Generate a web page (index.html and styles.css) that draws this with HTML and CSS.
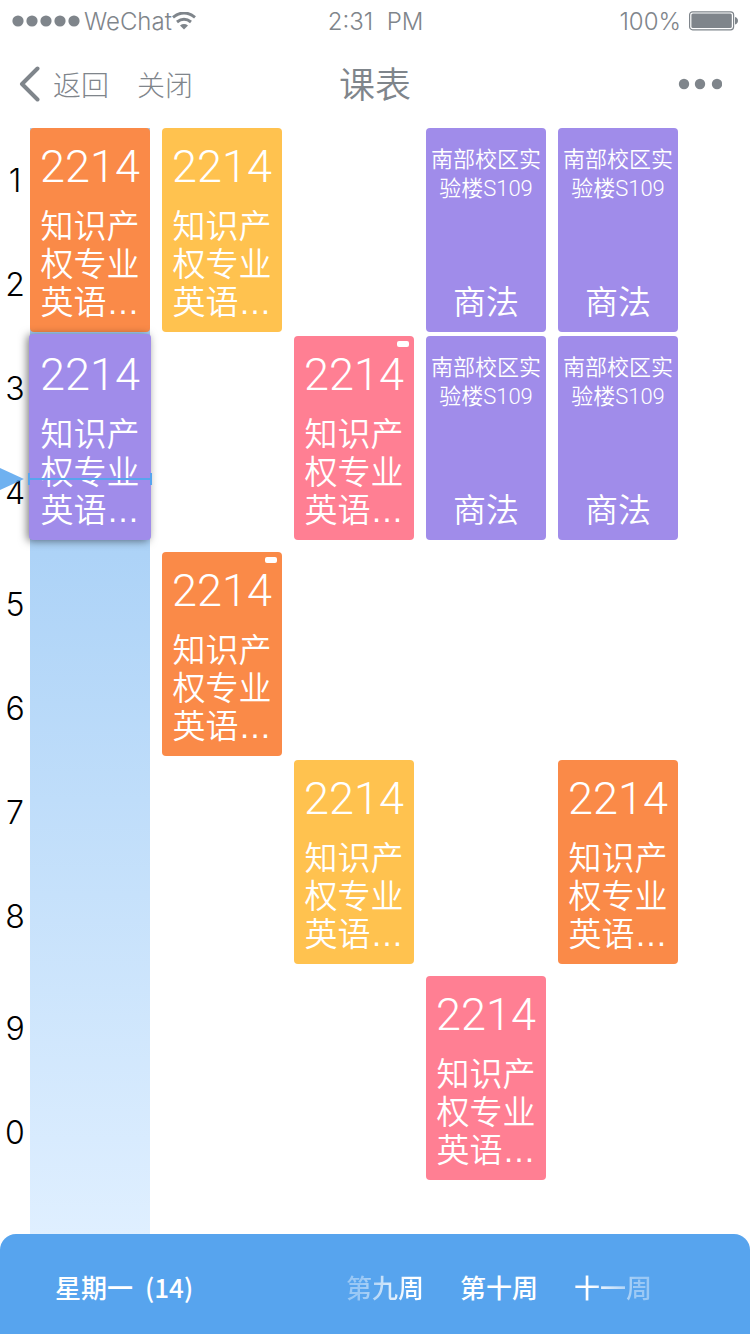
FILE: index.html
```html
<!DOCTYPE html>
<html lang="zh-CN">
<head>
<meta charset="utf-8">
<meta name="viewport" content="width=device-width, initial-scale=1">
<title>课表</title>
<link rel="stylesheet" href="styles.css">
</head>
<body>
<div class="status">
  <div class="status-left">
    <svg class="signal" width="68" height="12" viewBox="0 0 68 12" aria-hidden="true"><circle cx="6" cy="6" r="5.6"/><circle cx="20" cy="6" r="5.6"/><circle cx="34" cy="6" r="5.6"/><circle cx="48" cy="6" r="5.6"/><circle cx="62" cy="6" r="5.6"/></svg>
    <span class="carrier">WeChat</span>
    <svg class="wifi" width="24" height="18" viewBox="0 0 24 18" aria-hidden="true"><path d="M1 5.4Q12-3.4 23 5.4M5 10Q12 4.4 19 10" fill="none" stroke="currentColor" stroke-width="3"/><path d="M8 13.4Q12 10.6 16 13.4L12 17.6Z"/></svg>
  </div>
  <div class="clock">2:31&nbsp; PM</div>
  <div class="status-right">
    <span>100%</span>
    <svg width="50" height="20" viewBox="0 0 50 20" aria-hidden="true"><rect x=".6" y=".8" width="44" height="18" rx="3" fill="none" stroke="currentColor" stroke-width="1.2"/><rect x="2.4" y="2.6" width="40.4" height="14.4" rx="1.5"/><path d="M46 6Q49 7 49 9.8T46 13.6Z"/></svg>
  </div>
</div>
<header class="nav">
  <div class="nav-left">
    <button class="back" type="button"><svg width="24" height="36" viewBox="0 0 24 36" aria-hidden="true"><path d="M21.5 2.5 6 18 21.5 33.5" fill="none" stroke="currentColor" stroke-width="4" stroke-linecap="round" stroke-linejoin="round"/></svg>返回</button>
    <button type="button">关闭</button>
  </div>
  <h1>课表</h1>
  <button class="more" type="button" aria-label="更多"><svg width="44" height="12" viewBox="0 0 44 12" aria-hidden="true"><circle cx="6" cy="6" r="5.2"/><circle cx="22" cy="6" r="5.2"/><circle cx="39" cy="6" r="5.2"/></svg></button>
</header>
<main class="schedule">
  <div class="today"></div>
  <span class="period p1">1</span>
  <span class="period p2">2</span>
  <span class="period p3">3</span>
  <span class="period p4">4</span>
  <span class="period p5">5</span>
  <span class="period p6">6</span>
  <span class="period p7">7</span>
  <span class="period p8">8</span>
  <span class="period p9">9</span>
  <span class="period p10">0</span>

  <article class="course orange day1 slot1"><b>2214</b><p>知识产权专业英语…</p></article>
  <article class="course yellow day2 slot1"><b>2214</b><p>知识产权专业英语…</p></article>
  <article class="course room purple day4 slot1"><span>南部校区实验楼S109</span><p>商法</p></article>
  <article class="course room purple day5 slot1"><span>南部校区实验楼S109</span><p>商法</p></article>

  <article class="course purple current day1 slot2"><b>2214</b><p>知识产权专业英语…</p>
    <svg class="pointer" width="24" height="22" viewBox="0 0 24 22" aria-hidden="true"><path d="M0 0 24 11 0 22Z"/></svg>
    <span class="now"></span>
  </article>
  <article class="course pink tagged day3 slot2"><b>2214</b><p>知识产权专业英语…</p></article>
  <article class="course room purple day4 slot2"><span>南部校区实验楼S109</span><p>商法</p></article>
  <article class="course room purple day5 slot2"><span>南部校区实验楼S109</span><p>商法</p></article>

  <article class="course orange tagged day2 slot3"><b>2214</b><p>知识产权专业英语…</p></article>
  <article class="course yellow day3 slot4"><b>2214</b><p>知识产权专业英语…</p></article>
  <article class="course orange day5 slot4"><b>2214</b><p>知识产权专业英语…</p></article>
  <article class="course pink day4 slot5"><b>2214</b><p>知识产权专业英语…</p></article>
</main>
<footer class="bar">
  <div class="date"><span>星期一</span><span>(14)</span></div>
  <div class="weeks">
    <button class="prev" type="button">第九周</button>
    <button type="button">第十周</button>
    <button class="next" type="button">十一周</button>
  </div>
</footer>
</body>
</html>
```
FILE: styles.css
```css
* { box-sizing: border-box; }
body {
  margin: 0;
  min-height: 100vh;
  display: flex;
  flex-direction: column;
  background: #fff;
  color: #7f858b;
  font-family: Roboto, "Noto Sans CJK SC", sans-serif;
  font-weight: 300;
}
svg { display: block; fill: currentColor; }
button {
  margin: 0;
  padding: 0;
  border: 0;
  background: none;
  color: inherit;
  font: inherit;
  cursor: pointer;
}
p, h1 { margin: 0; font-weight: 350; }

.status, .nav {
  display: grid;
  grid-template-columns: 1fr auto 1fr;
  align-items: center;
}
.status {
  height: 42px;
  padding: 0 11px 0 12px;
  font-family: Inter, sans-serif;
  font-size: 24px;
}
.status-left, .status-right { display: flex; align-items: center; }
.status-left { gap: 4px; }
.wifi { margin-left: -4px; }
.status-right { justify-content: flex-end; gap: 8px; }

.nav {
  height: 86px;
  padding: 0 16px 2px;
  font-size: 28px;
}
.nav-left { display: flex; align-items: center; gap: 28px; }
.back { display: flex; align-items: center; gap: 13px; }
.nav h1 { padding-top: 4px; font-size: 36px; line-height: 40px; }
.more { justify-self: end; margin-right: 12px; }

.schedule {
  flex: 1;
  display: grid;
  grid-template-columns: 18px repeat(5, 1fr);
  grid-template-rows: repeat(4, 104px) 8px repeat(4, 104px) 8px repeat(2, 104px) minmax(50px, 1fr);
  column-gap: 12px;
  padding-right: 72px;
}
.today {
  grid-area: 1 / 2 / -1 / 3;
  background: linear-gradient(#a6cff6 30%, #dfefff);
}
.period {
  grid-column: 1;
  margin-right: -12px;
  align-self: center;
  text-align: center;
  color: #000;
  font-family: Inter, sans-serif;
  font-size: 32px;
}
.p1 { grid-row: 1; }
.p2 { grid-row: 2; }
.p3 { grid-row: 3; }
.p4 { grid-row: 4; }
.p5 { grid-row: 6; }
.p6 { grid-row: 7; }
.p7 { grid-row: 8; }
.p8 { grid-row: 9; }
.p9 { grid-row: 11; }
.p10 { grid-row: 12; }
.day1 { grid-column: 2; }
.day2 { grid-column: 3; }
.day3 { grid-column: 4; }
.day4 { grid-column: 5; }
.day5 { grid-column: 6; }
.slot1 { grid-row: 1 / 3; }
.slot2 { grid-row: 3 / 5; }
.slot3 { grid-row: 6 / 8; }
.slot4 { grid-row: 8 / 10; }
.slot5 { grid-row: 11 / 13; }

.course {
  position: relative;
  display: flex;
  flex-direction: column;
  align-items: center;
  justify-content: space-between;
  margin-bottom: 4px;
  padding: 17px 4px 10px;
  border-radius: 4px;
  color: #fff;
}
.course b { font-size: 45px; line-height: 44px; font-weight: 300; }
.course p {
  width: 99px;
  font-family: "Liberation Sans", "Noto Sans CJK SC", sans-serif;
  font-size: 33px;
  line-height: 38px;
}
.room { text-align: center; }
.room span { font-size: 22px; line-height: 29px; font-weight: 350; }
.orange { background: #fa8a48; }
.yellow { background: #ffc24f; }
.purple { background: #a08cea; }
.pink { background: #ff7f93; }
.current {
  margin: -2px -1px 4px;
  padding-top: 19px;
  box-shadow: -2px 1px 8px rgba(0, 0, 0, .5);
}
.tagged::after {
  content: "";
  position: absolute;
  top: 5px;
  right: 5px;
  width: 12px;
  height: 6px;
  border-radius: 2px;
  background: #fff;
}
.now {
  position: absolute;
  top: 139px;
  left: -1px;
  right: -1px;
  height: 12px;
  border: solid #57a4ee;
  border-width: 0 2px;
  background: linear-gradient(#57a4ee, #57a4ee) center / 100% 2px no-repeat;
}
.pointer {
  position: absolute;
  top: 134px;
  left: -29px;
  color: #57a4ee;
  opacity: .85;
}

.bar {
  height: 100px;
  display: flex;
  align-items: center;
  justify-content: space-between;
  padding: 4px 98px 0 55px;
  border-radius: 16px 16px 0 0;
  background: #57a4ee;
  color: #fff;
  font-family: "Noto Sans CJK SC", sans-serif;
  font-size: 26px;
  font-weight: 500;
}
.date { display: flex; gap: 12px; }
.weeks { display: flex; gap: 36px; }
.prev, .next {
  color: transparent;
  background: linear-gradient(to right, rgba(255, 255, 255, .4) 20%, #fff 80%);
  -webkit-background-clip: text;
  background-clip: text;
}
.next { background-image: linear-gradient(to left, rgba(255, 255, 255, .4) 20%, #fff 80%); }
```
